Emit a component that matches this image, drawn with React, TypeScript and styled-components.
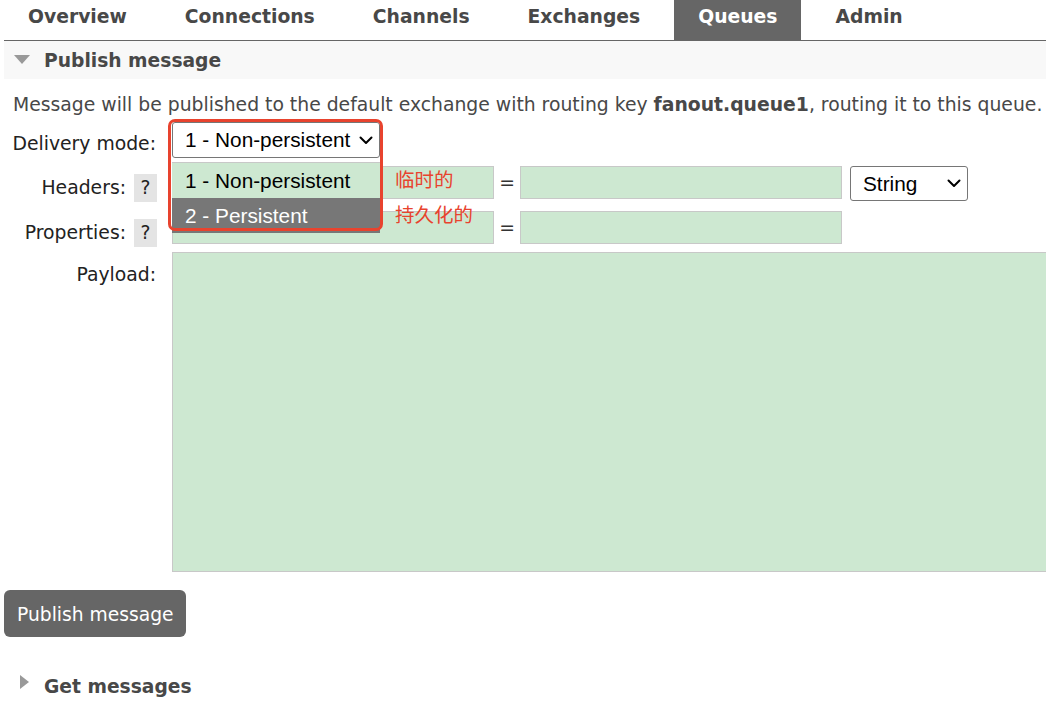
import React from "react"
import styled, { createGlobalStyle } from "styled-components"

const GlobalStyle = createGlobalStyle`
  html, body {
    margin: 0;
    padding: 0;
    overflow: hidden;
    background: #fff;
  }
  body {
    font-family: "DejaVu Sans", Verdana, sans-serif;
    font-size: 18.8px;
    color: #484848;
  }
`

const Page = styled.div`
  width: 1042px;
  padding-left: 4px;
`

const Nav = styled.ul`
  display: flex;
  gap: 10px;
  height: 41px;
  box-sizing: border-box;
  margin: 0;
  padding: 0;
  list-style: none;
  border-bottom: 1px solid #666;
`

const Tab = styled.li<{ $active?: boolean }>`
  height: 40px;
  box-sizing: border-box;
  padding: 6px 24px 0;
  line-height: 22px;
  font-size: 18.75px;
  font-weight: bold;
  background: ${(p) => (p.$active ? "#666" : "transparent")};
  color: ${(p) => (p.$active ? "#fff" : "#484848")};
`

const SectionHead = styled.h2<{ $open?: boolean }>`
  display: flex;
  align-items: center;
  height: 38px;
  margin: ${(p) => (p.$open ? "0" : "30px 0 0")};
  padding-top: 1px;
  box-sizing: border-box;
  font-size: 18.7px;
  font-weight: bold;
  color: #484848;
  background: ${(p) => (p.$open ? "#f8f8f8" : "transparent")};
`

const Arrow = styled.span<{ $open?: boolean }>`
  width: 40px;
  display: flex;
  align-items: center;
  padding-left: ${(p) => (p.$open ? "10px" : "16px")};
  box-sizing: border-box;
  margin-top: ${(p) => (p.$open ? "-3px" : "-9px")};

  &::before {
    content: "";
    width: 0;
    height: 0;
    ${(p) =>
      p.$open
        ? `border-left: 8px solid transparent;
           border-right: 8px solid transparent;
           border-top: 9px solid #999;`
        : `border-top: 7.5px solid transparent;
           border-bottom: 7.5px solid transparent;
           border-left: 9px solid #999;`}
  }
`

const Intro = styled.p`
  margin: 15px 0 0;
  padding-left: 9px;
  line-height: 22px;
  white-space: nowrap;
`

const Form = styled.div`
  display: grid;
  grid-template-columns: 153px 1fr;
  grid-template-rows: 44px 45px 41px 320px;
  column-gap: 15px;
  margin-top: 6px;
`

const LabelCell = styled.div<{ $pt: number }>`
  display: flex;
  justify-content: flex-end;
  align-items: flex-start;
  gap: 8px;
  padding-top: ${(p) => p.$pt}px;
  padding-right: 1px;
  line-height: 22px;
  color: #222;
  white-space: nowrap;
`

const Help = styled.span`
  display: flex;
  align-items: center;
  justify-content: center;
  width: 23px;
  height: 28px;
  margin-top: -3px;
  margin-right: -1px;
  background: #e4e4e4;
  color: #222;
`

const FieldCell = styled.div`
  position: relative;
  display: flex;
  align-items: flex-start;
`

const TextInput = styled.div`
  width: 322px;
  height: 33px;
  box-sizing: border-box;
  background: #cde8d1;
  border: 1px solid #c8c8c8;
`

const Equals = styled.span`
  width: 26px;
  text-align: center;
  line-height: 33px;
  color: #333;
`

const SelectBox = styled.div<{ $w: number; $h: number; $pr: number }>`
  display: flex;
  align-items: center;
  justify-content: space-between;
  width: ${(p) => p.$w}px;
  height: ${(p) => p.$h}px;
  margin-left: 8px;
  padding: 0 ${(p) => p.$pr}px 0 12px;
  box-sizing: border-box;
  background: #fff;
  border: 1px solid #767676;
  border-radius: 3px;
  font-family: "Liberation Sans", Arial, sans-serif;
  font-size: 20.8px;
  color: #000;
`

const DeliverySelect = styled(SelectBox)`
  margin-left: 0;
`

const OptionList = styled.div`
  position: absolute;
  top: 40px;
  left: 0;
  width: 208px;
  border-top: 1px solid #c8c8c8;
  font-family: "Liberation Sans", Arial, sans-serif;
  font-size: 20.8px;
`

const Option = styled.div<{ $hover?: boolean }>`
  height: 35px;
  padding-left: 13px;
  line-height: 35px;
  background: ${(p) => (p.$hover ? "#777" : "#cde8d1")};
  color: ${(p) => (p.$hover ? "#fff" : "#000")};
`

const Callout = styled.div`
  position: absolute;
  top: -3px;
  left: -4px;
  width: 215px;
  height: 112px;
  box-sizing: border-box;
  border: 3px solid #e8432e;
  border-radius: 7px;
  pointer-events: none;
`

const Note = styled.span<{ $top: number }>`
  position: absolute;
  top: ${(p) => p.$top}px;
  left: 223px;
  font-family: "Noto Sans CJK SC", sans-serif;
  font-size: 19.5px;
  line-height: 24px;
  color: #e8432e;
  white-space: nowrap;
`

const Payload = styled.div`
  width: 890px;
  height: 320px;
  box-sizing: border-box;
  background: #cde8d1;
  border: 1px solid #c8c8c8;
`

const PublishButton = styled.button`
  display: block;
  width: 182px;
  height: 47px;
  margin-top: 18px;
  padding: 1px 0 0 13px;
  text-align: left;
  border: none;
  border-radius: 6px;
  background: #666;
  color: #fff;
  font-family: "DejaVu Sans", Verdana, sans-serif;
  font-size: 18.7px;
`

const Overlay = styled.div`
  position: absolute;
  top: 122px;
  left: 172px;
  width: 0;
  height: 0;
`

const Chevron = () => (
  <svg width="14" height="9" viewBox="0 0 14 9" fill="none">
    <polyline
      points="1.5,1.5 7,7 12.5,1.5"
      stroke="#000"
      strokeWidth="2"
      strokeLinecap="round"
      strokeLinejoin="round"
    />
  </svg>
)

const tabs = ["Overview", "Connections", "Channels", "Exchanges", "Queues", "Admin"]

export default function App() {
  return (
    <Page>
      <GlobalStyle />
      <Nav>
        {tabs.map((t) => (
          <Tab key={t} $active={t === "Queues"}>
            {t}
          </Tab>
        ))}
      </Nav>

      <SectionHead $open>
        <Arrow $open />
        Publish message
      </SectionHead>

      <Intro>
        Message will be published to the default exchange with routing key{" "}
        <b>fanout.queue1</b>, routing it to this queue.
      </Intro>

      <Form>
        <LabelCell $pt={11}>Delivery mode:</LabelCell>
        <FieldCell>
          <DeliverySelect $w={208} $h={36} $pr={6}>
            1 - Non-persistent
            <Chevron />
          </DeliverySelect>
        </FieldCell>

        <LabelCell $pt={11}>
          Headers: <Help>?</Help>
        </LabelCell>
        <FieldCell>
          <TextInput />
          <Equals>=</Equals>
          <TextInput />
          <SelectBox $w={118} $h={35} $pr={6}>
            String
            <Chevron />
          </SelectBox>
        </FieldCell>

        <LabelCell $pt={11}>
          Properties: <Help>?</Help>
        </LabelCell>
        <FieldCell>
          <TextInput />
          <Equals>=</Equals>
          <TextInput />
        </FieldCell>

        <LabelCell $pt={12}>Payload:</LabelCell>
        <FieldCell>
          <Payload />
        </FieldCell>
      </Form>

      <PublishButton>Publish message</PublishButton>

      <SectionHead>
        <Arrow />
        Get messages
      </SectionHead>

      {/* open dropdown + annotation, laid over the form */}
      <Overlay>
        <OptionList>
          <Option>1 - Non-persistent</Option>
          <Option $hover>2 - Persistent</Option>
        </OptionList>
        <Callout />
        <Note $top={45}>临时的</Note>
        <Note $top={80}>持久化的</Note>
      </Overlay>
    </Page>
  )
}
